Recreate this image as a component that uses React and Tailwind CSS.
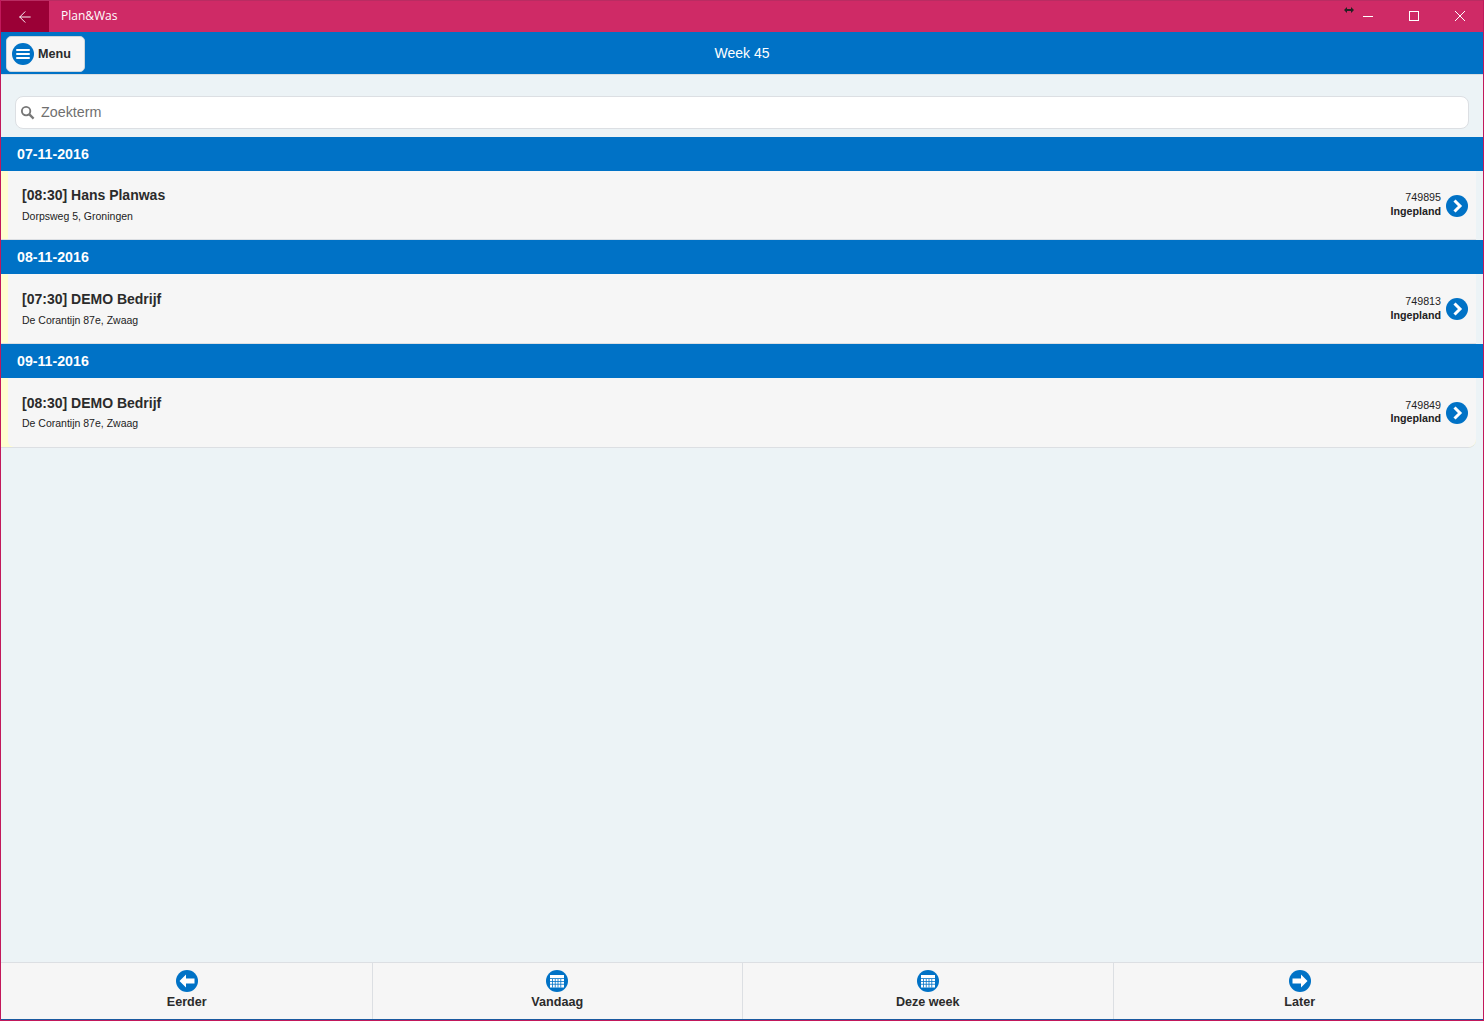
import { ArrowLeft } from "lucide-react";

// row paddings differ by a pixel per row in the original
const DAYS = [
    { date: "07-11-2016", title: "[08:30] Hans Planwas", address: "Dorpsweg 5, Groningen", nr: "749895", height: "h-[69px]", textTop: "pt-[15px]", addressTop: "mt-[5px]", infoTop: "pt-[19px]", statusTop: "" },
    { date: "08-11-2016", title: "[07:30] DEMO Bedrijf", address: "De Corantijn 87e, Zwaag", nr: "749813", height: "h-[70px]", textTop: "pt-[16px]", addressTop: "mt-[5px]", infoTop: "pt-[20px]", statusTop: "" },
    { date: "09-11-2016", title: "[08:30] DEMO Bedrijf", address: "De Corantijn 87e, Zwaag", nr: "749849", height: "h-[70px]", textTop: "pt-[16px]", addressTop: "mt-[4px]", infoTop: "pt-[20px]", statusTop: "-mt-[1px]" },
];

function MenuIcon() {
    return (
        <svg width="22" height="22" viewBox="0 0 22 22">
            <circle cx="11" cy="11" r="11" fill="#0072c6" />
            <path d="M5 7h12M5 11h12M5 15h12" stroke="#fff" strokeWidth="2" strokeLinecap="round" />
        </svg>
    );
}

function ChevronIcon() {
    return (
        <svg width="22" height="22" viewBox="0 0 22 22" className="shrink-0">
            <circle cx="11" cy="11" r="11" fill="#0072c6" />
            <path d="M8.5 5.5l5.5 5.5-5.5 5.5" fill="none" stroke="#fff" strokeWidth="3" />
        </svg>
    );
}

function ArrowIcon({ dir }) {
    return (
        <svg width="22" height="22" viewBox="0 0 22 22">
            <circle cx="11" cy="11" r="11" fill="#0072c6" />
            {dir === "left" ? (
                <path d="M3.5 11l6.5-6.5v4h8.5v5H10v4z" fill="#fff" />
            ) : (
                <path d="M18.5 11L12 4.5v4H3.5v5H12v4z" fill="#fff" />
            )}
        </svg>
    );
}

function CalendarIcon() {
    return (
        <svg width="22" height="22" viewBox="0 0 22 22">
            <circle cx="11" cy="11" r="11" fill="#0072c6" />
            <path d="M4 5h14v12.5H4z" fill="#fff" />
            <path d="M4 8.5h14" stroke="#0072c6" strokeWidth="0.8" />
            <path d="M6.5 9v8.5M9.25 9v8.5M12 9v8.5M14.75 9v8.5M4 11.5h14M4 14.25h14" stroke="#0072c6" strokeWidth="0.8" />
        </svg>
    );
}

function FooterButton({ label, icon, className }) {
    return (
        <div className={`flex flex-col items-center pt-[7px] ${className}`}>
            {icon}
            <span className="mt-[2px] text-[12.6px] leading-[16px] font-bold text-[#2b2b2b]">{label}</span>
        </div>
    );
}

export default function App() {
    return (
        <div className="h-screen flex flex-col overflow-hidden border-x border-b border-[#c2185b] bg-[#ecf3f6] font-['Liberation_Sans',sans-serif]">
            {/* title bar */}
            <div className="h-[32px] shrink-0 flex items-center border-t border-[#b92c62] bg-[#cf2a66] text-white">
                <div className="w-[48px] h-full flex items-center justify-center bg-[#9b0036]">
                    <ArrowLeft size={18} strokeWidth={1.25} />
                </div>
                <span className="ml-3 -mt-[2px] text-[12px] font-['Open_Sans',sans-serif]">Plan&amp;Was</span>
                <svg width="140" height="31" viewBox="0 1 140 31" className="ml-auto -mr-[1px]">
                    <path d="M0 10l3-3v2h4V7l3 3-3 3v-2H3v2z" fill="#222" />
                    <path d="M19 16.5h10" stroke="#fff" />
                    <rect x="65.5" y="11.5" width="9" height="9" fill="none" stroke="#fff" />
                    <path d="M111 11l10 10M121 11l-10 10" stroke="#fff" />
                </svg>
            </div>

            {/* blue header */}
            <div className="h-[43px] shrink-0 relative flex items-center justify-center bg-[#0072c6] border-b border-[#d9dee2]">
                <div className="absolute left-[5px] top-[4px] h-[36px] w-[79px] flex items-center gap-[4px] pl-[5px] rounded-[5px] bg-[#f6f6f6] border border-[#cfd6db]">
                    <MenuIcon />
                    <span className="text-[12.6px] font-bold text-[#2b2b2b]">Menu</span>
                </div>
                <span className="text-[14px] text-white">Week 45</span>
            </div>

            {/* search */}
            <div className="pt-[21px] pb-[8px] px-[14px] shrink-0">
                <div className="h-[33px] flex items-center rounded-[8px] bg-white border border-[#dcdfe3]">
                    <svg width="15" height="15" viewBox="0 0 16 16" className="ml-[4px]">
                        <circle cx="6.5" cy="6.5" r="4.5" fill="none" stroke="#777" strokeWidth="2" />
                        <path d="M10 10l4.5 4.5" stroke="#777" strokeWidth="2.4" />
                    </svg>
                    <span className="ml-[6px] text-[14.3px] text-[#6f6f6f]">Zoekterm</span>
                </div>
            </div>

            {/* list */}
            <div className="flex-1">
                {DAYS.map((day, i) => (
                    <div key={day.date}>
                        <div className="h-[34px] flex items-center pl-4 pt-[1px] bg-[#0072c6] text-[14.2px] font-bold text-white">
                            {day.date}
                        </div>
                        <div className={`flex mr-[7px] ${day.height} border-b border-[#dcdfe3] bg-[#ffffd0] ${i === DAYS.length - 1 ? "rounded-br-[8px]" : ""}`}>
                            <div className={`ml-[7px] flex-1 flex justify-between pl-[14px] pr-[8px] bg-[#f6f6f6] ${i === DAYS.length - 1 ? "rounded-bl-[6px] rounded-br-[8px]" : ""}`}>
                                <div className={day.textTop}>
                                    <div className="text-[14px] leading-[18px] font-bold text-[#2b2b2b]">{day.title}</div>
                                    <div className={`${day.addressTop} text-[10.5px] leading-[14px] text-[#222]`}>{day.address}</div>
                                </div>
                                <div className="flex items-start gap-[5px]">
                                    <div className={`text-right text-[10.7px] leading-[14px] text-[#222] ${day.infoTop}`}>
                                        <div>{day.nr}</div>
                                        <div className={`font-bold ${day.statusTop}`}>Ingepland</div>
                                    </div>
                                    <div className="pt-[24px]">
                                        <ChevronIcon />
                                    </div>
                                </div>
                            </div>
                        </div>
                    </div>
                ))}
            </div>

            {/* footer */}
            <div className="h-[58px] shrink-0 grid grid-cols-4 border-t border-b border-t-[#dcdfe3] border-b-[#1a5a9f] bg-[#f6f6f6]">
                <FooterButton label="Eerder" icon={<ArrowIcon dir="left" />} className="pl-[1px]" />
                <FooterButton label="Vandaag" icon={<CalendarIcon />} className="border-l border-[#dcdfe3]" />
                <FooterButton label="Deze week" icon={<CalendarIcon />} className="border-l border-[#dcdfe3]" />
                <FooterButton label="Later" icon={<ArrowIcon dir="right" />} className="border-l border-[#dcdfe3] pl-[3px]" />
            </div>
        </div>
    );
}
